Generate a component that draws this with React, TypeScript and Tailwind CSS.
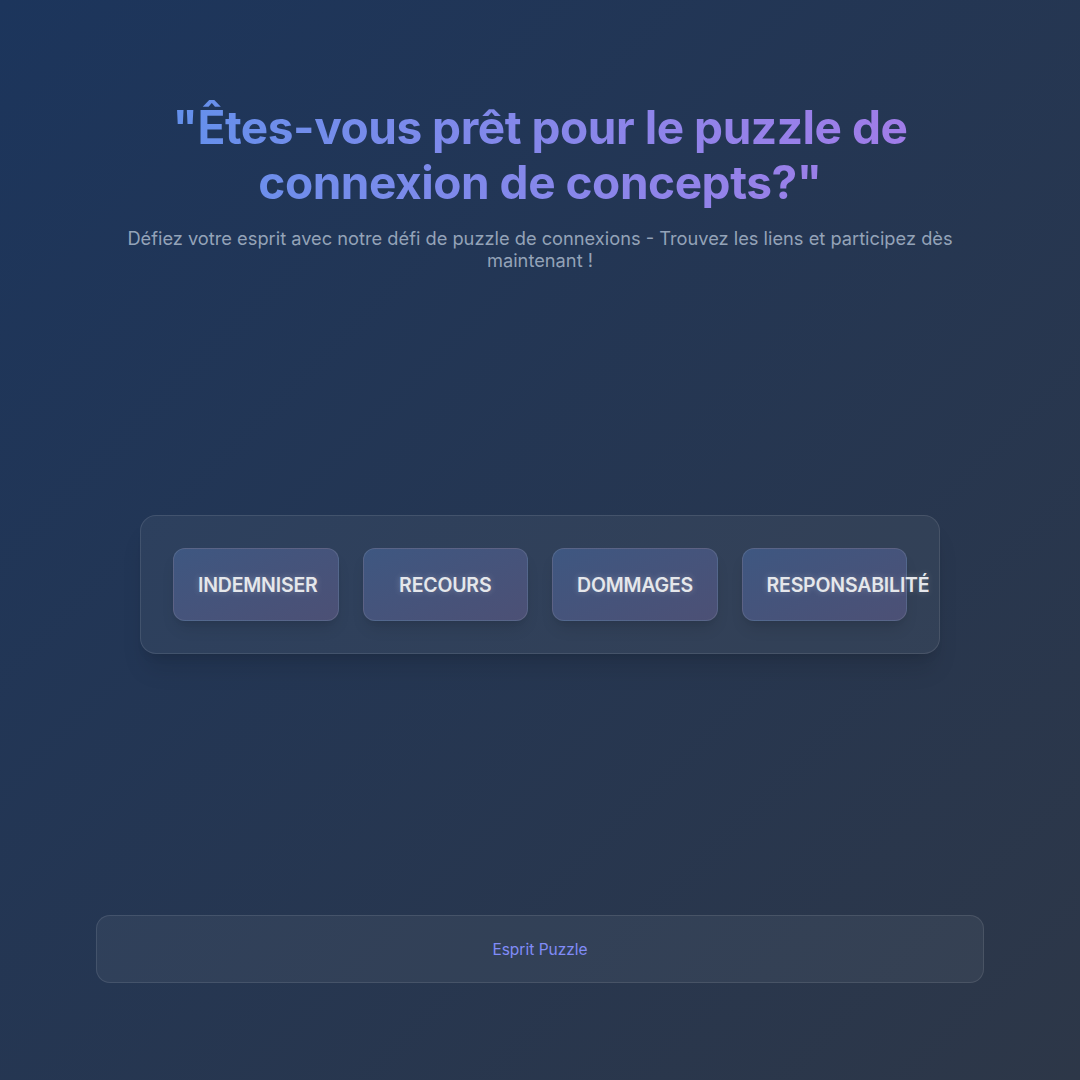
import React from "react";

const words = ["INDEMNISER", "RECOURS", "DOMMAGES", "RESPONSABILITÉ"];

export default function App() {
  return (
    <div
      className="w-[1080px] h-[1080px] flex flex-col bg-gradient-to-br from-[#1c355c] to-[#2d3748] px-24"
      style={{ fontFamily: "Inter, 'Noto Sans', sans-serif" }}
    >
      <header className="pt-[100px] text-center">
        <h1 className="text-[46px] leading-[55px] font-bold tracking-[-0.01em] bg-gradient-to-r from-[#5b92ec] to-[#a57ae8] bg-clip-text text-transparent px-[40px]">
          "Êtes-vous prêt pour le puzzle de connexion de concepts?"
        </h1>
        <p className="mt-[17px] text-[18.25px] leading-[22px] text-[#94a3b8]">
          Défiez votre esprit avec notre défi de puzzle de connexions - Trouvez les liens et participez dès maintenant !
        </p>
      </header>
      <main className="flex-1 flex items-center justify-center">
        <div className="w-[800px] rounded-2xl border border-white/10 bg-white/5 p-8 shadow-xl grid grid-cols-4 gap-6 mb-[17px]">
          {words.map((w) => (
            <div
              key={w}
              className="h-[73px] rounded-xl border border-white/10 bg-gradient-to-br from-[#3e5781] to-[#4c5075] shadow-lg flex items-center px-6"
            >
              <span className="block w-full text-center whitespace-nowrap text-[19.5px] font-semibold text-[#e5e7eb] tracking-[-0.01em] pt-[2px] [text-shadow:0_0_6px_rgba(255,255,255,0.25)]">
                {w}
              </span>
            </div>
          ))}
        </div>
      </main>
      <footer className="mb-[97px] h-[68px] rounded-[14px] border border-white/10 bg-white/5 flex items-center justify-center">
        <span className="text-[15.5px] text-[#818cf8] pt-[2px]">Esprit Puzzle</span>
      </footer>
    </div>
  );
}
